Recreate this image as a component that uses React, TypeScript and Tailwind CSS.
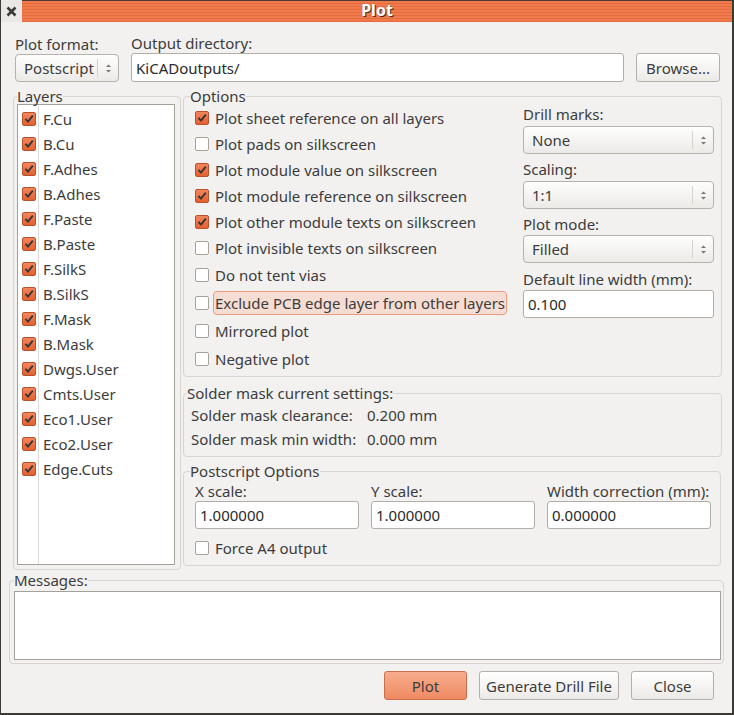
import React from "react";
import clsx from "clsx";

function Check({ on }: { on?: boolean }) {
  if (on) {
    return (
      <span className="flex h-[14px] w-[14px] shrink-0 items-center justify-center rounded-[2px] border border-[#b9502b] bg-gradient-to-b from-[#f3865c] to-[#e2612f]">
        <svg width="10" height="10" viewBox="0 0 10 10">
          <path d="M1.4 4.8 L4 7.6 L8.8 1.6" fill="none" stroke="#3a3532" strokeWidth="1.9" />
        </svg>
      </span>
    );
  }
  return <span className="h-[14px] w-[14px] shrink-0 rounded-[2px] border border-[#a7a29c] bg-white" />;
}

function Arrows() {
  return (
    <svg width="7" height="11" viewBox="0 0 7 11">
      <path d="M1 4 L3.5 1.5 L6 4 Z" fill="#7a7570" />
      <path d="M1 7 L3.5 9.5 L6 7 Z" fill="#7a7570" />
    </svg>
  );
}

function Select({ value, className }: { value: string; className?: string }) {
  return (
    <div
      className={clsx(
        "flex h-[28px] items-center rounded-[4px] border border-[#b6b2ab] bg-gradient-to-b from-[#fefefe] to-[#eceae7]",
        className
      )}
    >
      <span className="flex-1 truncate pl-[8px]">{value}</span>
      <span className="h-[18px] w-px bg-[#d6d2cc]" />
      <span className="flex w-[20px] justify-center">
        <Arrows />
      </span>
    </div>
  );
}

function Field({ value, className }: { value: string; className?: string }) {
  return (
    <div
      className={clsx(
        "flex h-[28px] items-center rounded-[3px] border border-[#b2aea7] bg-white pl-[4px] text-[#2a2a2a]",
        className
      )}
    >
      {value}
    </div>
  );
}

function Button({ children, primary, className }: { children: string; primary?: boolean; className?: string }) {
  return (
    <div
      className={clsx(
        "flex h-[29px] items-center justify-center rounded-[3px] border",
        primary
          ? "border-[#c8704c] bg-gradient-to-b from-[#f7ad8e] to-[#ef8a61]"
          : "border-[#b4b0a9] bg-gradient-to-b from-[#ffffff] to-[#eceae7]",
        className
      )}
    >
      {children}
    </div>
  );
}

const layers = [
  "F.Cu",
  "B.Cu",
  "F.Adhes",
  "B.Adhes",
  "F.Paste",
  "B.Paste",
  "F.SilkS",
  "B.SilkS",
  "F.Mask",
  "B.Mask",
  "Dwgs.User",
  "Cmts.User",
  "Eco1.User",
  "Eco2.User",
  "Edge.Cuts",
];

const options: [string, boolean][] = [
  ["Plot sheet reference on all layers", true],
  ["Plot pads on silkscreen", false],
  ["Plot module value on silkscreen", true],
  ["Plot module reference on silkscreen", true],
  ["Plot other module texts on silkscreen", true],
  ["Plot invisible texts on silkscreen", false],
  ["Do not tent vias", false],
  ["Exclude PCB edge layer from other layers", false],
  ["Mirrored plot", false],
  ["Negative plot", false],
];

export default function App() {
  return (
    <div className="flex h-[715px] w-[734px] flex-col border-b-2 border-l border-r-2 border-[#3b3a36] bg-[#f2f1f0] font-['Noto_Sans',sans-serif] text-[15px] leading-[18px] text-[#3c3c3c]">
      {/* title bar */}
      <div className="flex h-[22px] shrink-0">
        <div className="flex w-[21px] items-center justify-center bg-[#e9e8e6]">
          <svg width="11" height="11" viewBox="0 0 11 11">
            <path d="M1.5 1.5 L9.5 9.5 M9.5 1.5 L1.5 9.5" stroke="#3a3a3a" strokeWidth="2.6" />
          </svg>
        </div>
        <div className="flex flex-1 items-center justify-center border-t border-[#4a3a33] bg-[repeating-linear-gradient(to_bottom,#f07a4b_0px,#f07a4b_2px,#e46d3f_2px,#e46d3f_3px)] pb-[3px] font-bold text-[16px] text-white [text-shadow:1px_1px_0_#4a2c1e]">
          Plot
        </div>
      </div>

      {/* top row */}
      <div className="flex items-end gap-[12px] pl-[13px] pr-[12px] pt-[12px]">
        <div className="flex flex-col gap-[1px]">
          <span className="pl-[1px]">Plot format:</span>
          <Select value="Postscript" className="ml-[1px] w-[104px]" />
        </div>
        <div className="flex flex-1 flex-col gap-[1px]">
          <span>Output directory:</span>
          <Field value="KiCADoutputs/" className="h-[29px] text-[#2a2a2a]" />
        </div>
        <Button className="w-[84px]">Browse...</Button>
      </div>

      {/* main */}
      <div className="mt-[6px] flex items-start gap-[2px] pl-[12px]">
        <fieldset className="w-[168px] rounded-[4px] border border-[#d8d4cf] pb-[4px] pl-[3px] pr-[5px]">
          <legend className="leading-[16px]">Layers</legend>
          <div className="flex h-[461px] flex-col border border-[#a4a09a] bg-white pt-[1px]">
            {layers.map((l) => (
              <div key={l} className="flex h-[25px] items-center">
                <div className="flex h-full w-[21px] items-center justify-end border-r border-[#dedbd7] pr-[2px]">
                  <Check on />
                </div>
                <span className="pl-[4px]">{l}</span>
              </div>
            ))}
            <div className="w-[21px] flex-1 border-r border-[#dedbd7]" />
          </div>
        </fieldset>

        <div className="flex w-[539px] flex-col">
          <fieldset className="rounded-[4px] border border-[#d8d4cf] pb-[3px] pl-[6px] pr-[7px]">
            <legend className="leading-[16px]">Options</legend>
            <div className="flex pl-[5px]">
              <div className="flex flex-1 flex-col pt-[1px]">
                {options.map(([t, on], i) => (
                  <div key={t} className={clsx("flex items-center", i < 6 ? "h-[26px]" : "h-[28px]")}>
                    <Check on={on} />
                    {i === 7 ? (
                      <span className="ml-[4px] flex h-[24px] items-center rounded-[4px] border border-[#ec9c7d] bg-[#f6ddd3] pl-[1px] pr-[1px]">
                        {t}
                      </span>
                    ) : (
                      <span className="ml-[6px]">{t}</span>
                    )}
                  </div>
                ))}
              </div>
              <div className="flex w-[191px] flex-col pt-[1px]">
                <span>Drill marks:</span>
                <Select value="None" className="mt-[3px]" />
                <span className="mt-[6px]">Scaling:</span>
                <Select value="1:1" className="mt-[3px]" />
                <span className="mt-[6px]">Plot mode:</span>
                <Select value="Filled" className="mt-[2px]" />
                <span className="mt-[7px]">Default line width (mm):</span>
                <Field value="0.100" className="mt-[2px]" />
              </div>
            </div>
          </fieldset>

          <fieldset className="mt-[8px] rounded-[4px] border border-[#d8d4cf] pb-[8px] pl-[3px]">
            <legend className="leading-[16px]">Solder mask current settings:</legend>
            <div className="grid grid-cols-[176px_1fr] gap-y-[6px] pl-[4px] pt-[5px]">
              <span>Solder mask clearance:</span>
              <span>0.200 mm</span>
              <span>Solder mask min width:</span>
              <span>0.000 mm</span>
            </div>
          </fieldset>

          <fieldset className="mt-[6px] w-[538px] rounded-[4px] border border-[#d8d4cf] pb-[8px] pl-[6px]">
            <legend className="leading-[16px]">Postscript Options</legend>
            <div className="flex gap-[12px] pl-[5px] pt-[3px]">
              {[
                ["X scale:", "1.000000"],
                ["Y scale:", "1.000000"],
                ["Width correction (mm):", "0.000000"],
              ].map(([l, v]) => (
                <div key={l} className="flex w-[164px] flex-col gap-[1px]">
                  <span className="whitespace-nowrap">{l}</span>
                  <Field value={v} className="h-[27px]" />
                </div>
              ))}
            </div>
            <div className="mt-[10px] flex h-[18px] items-center pl-[5px]">
              <Check />
              <span className="ml-[6px]">Force A4 output</span>
            </div>
          </fieldset>
        </div>
      </div>

      {/* messages */}
      <fieldset className="ml-[8px] mr-[8px] mt-[2px] rounded-[4px] border border-[#d8d4cf] pb-[3px] pl-[4px] pr-[2px]">
        <legend className="leading-[16px]">Messages:</legend>
        <div className="mt-[3px] h-[69px] border border-[#a4a09a] bg-white" />
      </fieldset>

      {/* buttons */}
      <div className="mt-[7px] flex justify-end gap-[12px] pr-[18px]">
        <Button primary className="w-[83px]">
          Plot
        </Button>
        <Button className="w-[140px]">Generate Drill File</Button>
        <Button className="w-[83px]">Close</Button>
      </div>
    </div>
  );
}
